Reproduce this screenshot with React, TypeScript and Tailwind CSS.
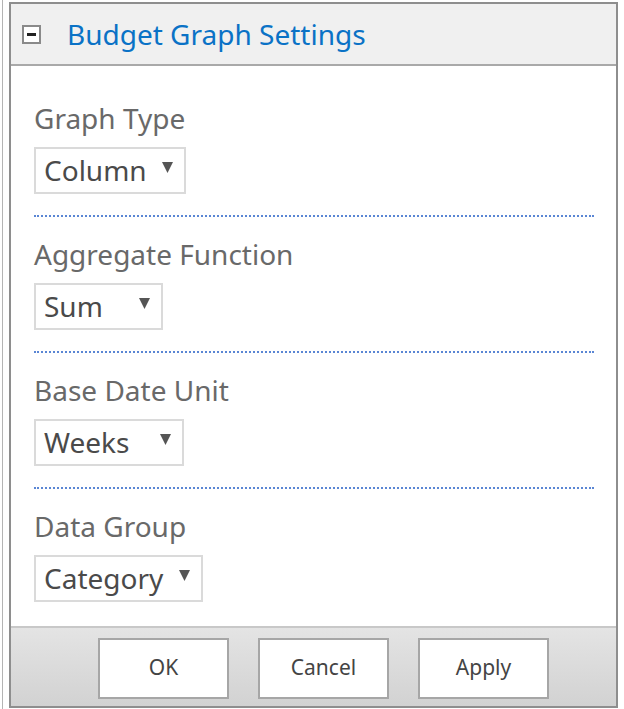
import React from "react";

function Arrow() {
  return (
    <svg width="11" height="11" viewBox="0 0 11 11" className="shrink-0 mb-[6px]">
      <path d="M0 0 L11 0 L5.5 11 Z" fill="#555" />
    </svg>
  );
}

function Select({ value, width, textW }: { value: string; width: number; textW: number }) {
  return (
    <div
      className="h-[47px] border-2 border-[#dadada] flex items-center pl-[8px] bg-white"
      style={{ width }}
    >
      <span className="text-[28px] leading-none text-[#4a4a4a] pb-[2px]" style={{ width: textW }}>
        {value}
      </span>
      <Arrow />
    </div>
  );
}

function Section({
  label,
  value,
  width,
  textW,
  divider,
}: {
  label: string;
  value: string;
  width: number;
  textW: number;
  divider: boolean;
}) {
  return (
    <div className="flex flex-col">
      <div className="h-[36px] text-[28px] leading-[36px] text-[#696969] whitespace-nowrap">{label}</div>
      <div className="mt-[11px]">
        <Select value={value} width={width} textW={textW} />
      </div>
      {divider ? (
        <div className="mt-[21px] mb-[19px] w-[560px] border-t-2 border-dotted border-[#5a86d4]" />
      ) : null}
    </div>
  );
}

function Btn({ label }: { label: string }) {
  return (
    <div className="w-[131px] h-[61px] border-2 border-[#a6a6a6] bg-white flex items-center justify-center text-[21px] text-[#444]">
      {label}
    </div>
  );
}

export default function App() {
  return (
    <div className="w-[624px] h-[709px] bg-white flex font-['Segoe_UI','Noto_Sans',sans-serif]">
      <div className="w-[2px]" />
      <div className="w-px bg-[#b4b4b4]" />
      <div className="w-[6px]" />
      <div className="mt-[2px] w-[609px] h-[706px] border-2 border-[#8e8e8e] flex flex-col">
        <div className="h-[62px] bg-[#f0f0f0] border-b-2 border-[#a9a9a9] flex items-center">
          <div className="ml-[11px] w-[19px] h-[19px] border-2 border-[#8a8a8a] bg-white flex items-center justify-center">
            <div className="w-[9px] h-[3px] bg-[#222]" />
          </div>
          <div className="ml-[26px] text-[28px] text-[#0a72c6] leading-none pb-[1px]">Budget Graph Settings</div>
        </div>
        <div className="flex-1 bg-white pl-[23px] pt-[34px]">
          <Section label="Graph Type" value="Column" width={152} textW={118} divider />
          <Section label="Aggregate Function" value="Sum" width={129} textW={95} divider />
          <Section label="Base Date Unit" value="Weeks" width={150} textW={116} divider />
          <Section label="Data Group" value="Category" width={169} textW={135} divider={false} />
        </div>
        <div className="h-[80px] border-t-2 border-[#c8c8c8] bg-gradient-to-b from-[#e4e4e4] to-[#d2d2d2] flex items-center gap-[29px] pl-[87px] pt-[2px]">
          <Btn label="OK" />
          <Btn label="Cancel" />
          <Btn label="Apply" />
        </div>
      </div>
    </div>
  );
}
